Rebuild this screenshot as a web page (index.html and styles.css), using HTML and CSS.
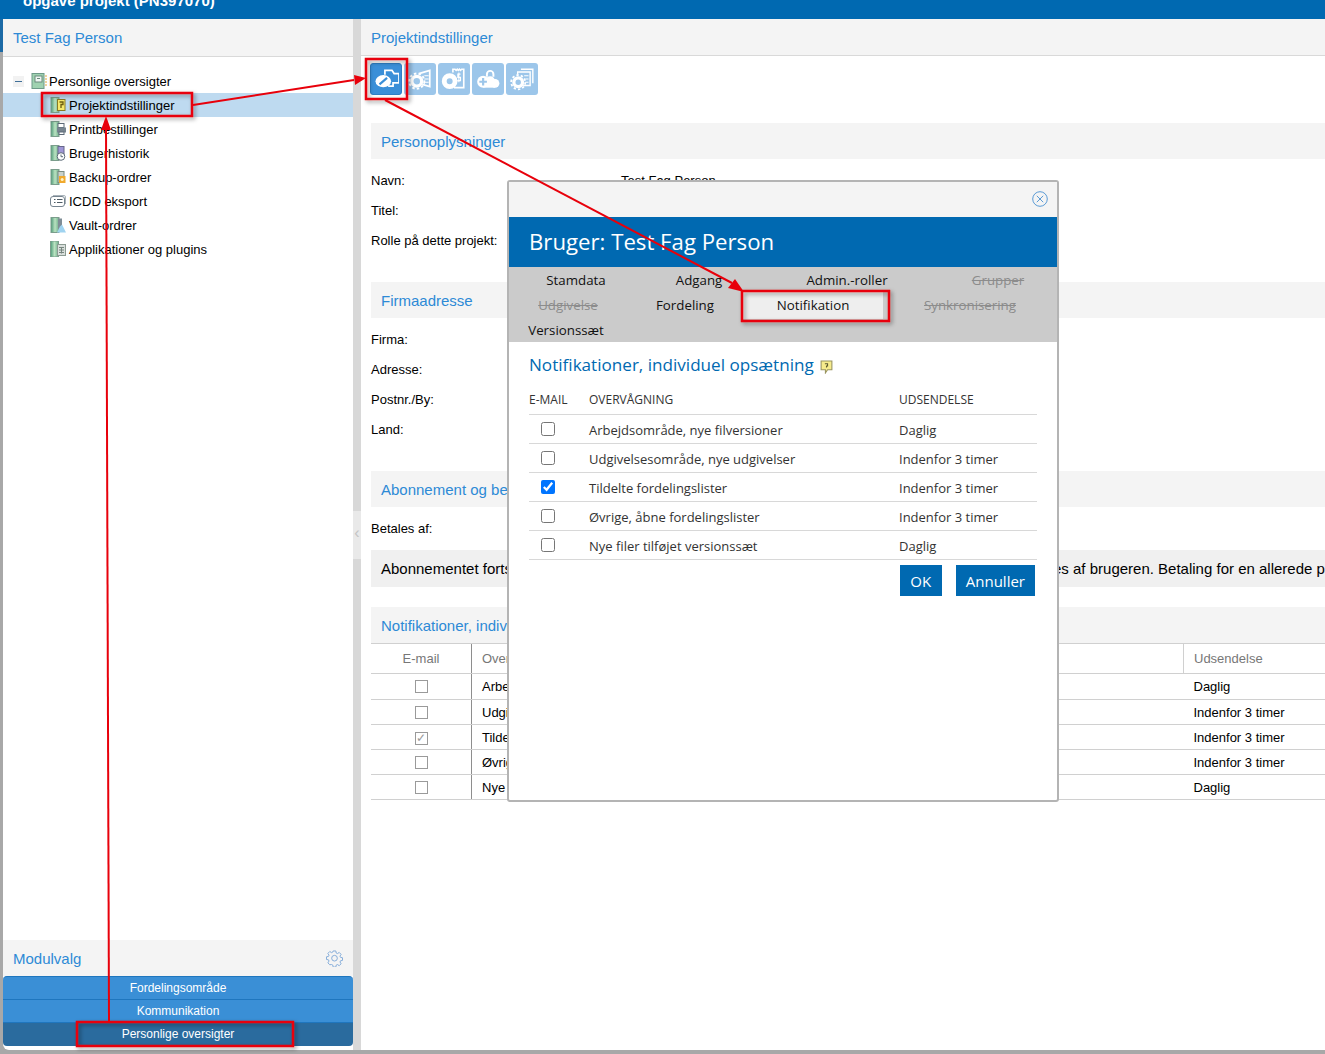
FILE: index.html
```html
<!DOCTYPE html>
<html>
<head>
    <meta charset="utf-8">
    <title>Projektindstillinger</title>
    <link rel="stylesheet" href="styles.css">
</head>
<body>
<svg class="defsOnly" width="0" height="0">
    <defs>
        <linearGradient id="bookGreen" x1="0" y1="0" x2="1" y2="0"><stop offset="0" stop-color="#4d9a78"/><stop offset="0.5" stop-color="#b9e2c0"/><stop offset="1" stop-color="#6fae8c"/></linearGradient>
    </defs>
</svg>
<div class="topBar"><span class="topTitle">opgave projekt (PN397070)</span></div>
<div class="shell">
    <div class="sidebar">
        <div class="panelHead"><span class="blueTitle">Test Fag Person</span></div>
        <div class="tree">
            <div class="treeRow rootRow">
                <span class="minus"></span>
                <svg class="bookIcon" viewBox="0 0 16 16"><rect x="1" y="0.500" width="12" height="15" fill="#9fd2b0" stroke="#6d9a88"/><rect x="4" y="3" width="7" height="6" fill="#eef6f2" stroke="#6b8a7c"/><path d="M6 5.500h3" stroke="#6b8a7c"/><path d="M14 3h2M14 6h2M14 9h2M14 12h2" stroke="#e0a83c"/></svg>
                Personlige oversigter
            </div>
            <div class="treeRow selected">
                <svg class="bookIcon" viewBox="0 0 16 16"><rect x="1" y="0.500" width="8" height="15" fill="url(#bookGreen)" stroke="#7b9d8c"/><rect x="7.500" y="2.500" width="7.500" height="11" fill="#f6e96c" stroke="#8a7a22"/><path d="M9.500 5h3.500v2.500h-2V11" fill="none" stroke="#6b5c10" stroke-width="1.300"/></svg>
                Projektindstillinger
            </div>
            <div class="treeRow">
                <svg class="bookIcon" viewBox="0 0 16 16"><rect x="1" y="0.500" width="8" height="15" fill="url(#bookGreen)" stroke="#7b9d8c"/><rect x="8" y="2.500" width="6" height="4" fill="#fff" stroke="#5d6a78"/><rect x="7" y="6.500" width="9" height="5" fill="#76838f"/><rect x="9" y="11" width="5" height="2.500" fill="#fff" stroke="#5d6a78"/></svg>
                Printbestillinger
            </div>
            <div class="treeRow">
                <svg class="bookIcon" viewBox="0 0 16 16"><rect x="1" y="0.500" width="8" height="15" fill="url(#bookGreen)" stroke="#7b9d8c"/><rect x="8" y="1.500" width="6" height="8" fill="#9e96d6" stroke="#66668a"/><circle cx="11" cy="11.500" r="3.800" fill="#fff" stroke="#5d6a78"/><path d="M11 9.500v2.200h2" stroke="#5d6a78" fill="none"/></svg>
                Brugerhistorik
            </div>
            <div class="treeRow">
                <svg class="bookIcon" viewBox="0 0 16 16"><rect x="1" y="0.500" width="8" height="15" fill="url(#bookGreen)" stroke="#7b9d8c"/><rect x="8" y="2.500" width="6" height="11" fill="#c9d2cc" stroke="#7b8a80"/><rect x="9" y="7" width="6.500" height="7" fill="#f0a92e"/><circle cx="12.200" cy="10.500" r="1.500" fill="#fff3c4"/></svg>
                Backup-ordrer
            </div>
            <div class="treeRow">
                <svg class="bookIcon" viewBox="0 0 16 16"><rect x="0.500" y="3.500" width="14" height="10" rx="2.500" fill="#fff" stroke="#76848f"/><path d="M3 2.500h11a1.500 1.500 0 0 1 1.500 1.500v7" fill="none" stroke="#aab4bb"/><path d="M4 6.500h1.500M4 9.500h1.500M7 6.500h5.500M7 9.500h5.500" stroke="#4f5c66" stroke-width="1.200"/></svg>
                ICDD eksport
            </div>
            <div class="treeRow">
                <svg class="bookIcon" viewBox="0 0 16 16"><rect x="1" y="0.500" width="8" height="15" fill="url(#bookGreen)" stroke="#7b9d8c"/><rect x="8" y="1.500" width="4" height="10" fill="#7f8d96"/><path d="M7 15.500l3-6 2-2 4 8z" fill="#9fd3f0"/></svg>
                Vault-ordrer
            </div>
            <div class="treeRow">
                <svg class="bookIcon" viewBox="0 0 16 16"><rect x="0.500" y="0" width="8" height="16" fill="url(#bookGreen)" stroke="#7b9d8c"/><rect x="7.500" y="3.500" width="8" height="11" fill="#d9dfdc" stroke="#8b9a92"/><path d="M9 6.500h5M9 9h5M9 11.500h5M11.500 6.500v6" stroke="#77857f"/></svg>
                Applikationer og plugins
            </div>
        </div>
        <div class="moduleHead">
            <span class="blueTitle">Modulvalg</span>
            <svg class="gear" viewBox="0 0 18 18"><path d="M7.600 1h2.800l.4 2.200 1.300.6 1.900-1.200 2 2-1.200 1.900.6 1.300 2.100.4v2.800l-2.100.4-.6 1.300 1.200 1.900-2 2-1.900-1.200-1.300.6-.4 2.100H7.600l-.4-2.100-1.300-.6L4 15.600l-2-2 1.200-1.900-.6-1.300L.5 10V7.200l2.100-.4.6-1.300L2 3.600l2-2 1.900 1.200 1.300-.6z" fill="none" stroke="#7fa9d8"/><circle cx="9" cy="8.700" r="3" fill="none" stroke="#7fa9d8"/></svg>
        </div>
        <div class="moduleBtn firstBtn">Fordelingsområde</div>
        <div class="moduleBtn">Kommunikation</div>
        <div class="moduleBtn active">Personlige oversigter</div>
    </div>

    <div class="splitter"><span class="splitTab">&#8249;</span></div>

    <div class="content">
        <div class="panelHead contentHead"><span class="blueTitle">Projektindstillinger</span></div>
        <div class="toolbar">
            <span class="toolBtn on">
                <svg viewBox="0 0 24 24"><path d="M11 8V4h6.500l2 3H24v8.500h-5.500v3H14" fill="none" stroke="#fff" stroke-width="1.600"/><ellipse cx="9.500" cy="14" rx="7.200" ry="5.600" fill="#fff"/><path d="M6 17l7-6" stroke="#3a8fd8" stroke-width="2"/></svg>
            </span>
            <span class="toolBtn">
                <svg viewBox="0 0 24 24"><path d="M11 7l10-3v15l-7-2" fill="none" stroke="#fff" stroke-width="1.600"/><path d="M16 9h4M16 12h4M16 15h4" stroke="#fff"/><circle cx="9" cy="14" r="4.500" fill="none" stroke="#fff" stroke-width="3"/><circle cx="9" cy="14" r="7" fill="none" stroke="#fff" stroke-width="1.800" stroke-dasharray="2.300 2"/></svg>
            </span>
            <span class="toolBtn">
                <svg viewBox="0 0 24 24"><path d="M11 6V3h2l1 1 1-1 1 1 1-1 1 1 1-1h2v17h-9" fill="none" stroke="#fff" stroke-width="1.500"/><path d="M18 7.500h-2.500v3h2.500v3h-3M16.500 6v9" fill="none" stroke="#fff"/><circle cx="8" cy="14" r="5" fill="none" stroke="#fff" stroke-width="4.500"/></svg>
            </span>
            <span class="toolBtn">
                <svg viewBox="0 0 24 24"><path d="M11 10V7.500a3 3 0 0 1 6 0V10" fill="none" stroke="#fff" stroke-width="1.800"/><g fill="#fff"><circle cx="7.500" cy="14.500" r="5.500"/><circle cx="14" cy="14" r="4.500"/><circle cx="18.500" cy="16" r="4"/><rect x="7.500" y="15" width="11" height="5"/></g><path d="M7.500 11v7M4 14.500h7" stroke="#9cc6ea" stroke-width="2"/></svg>
            </span>
            <span class="toolBtn">
                <svg viewBox="0 0 24 24"><path d="M11 3h11v13" fill="none" stroke="#fff" stroke-width="1.300"/><path d="M8 8V5.500h11.500V18H13" fill="none" stroke="#fff" stroke-width="1.300"/><path d="M14 9h4M15 12h3M15 15h3" stroke="#fff"/><circle cx="8.500" cy="15" r="4" fill="none" stroke="#fff" stroke-width="3"/><circle cx="8.500" cy="15" r="6.500" fill="none" stroke="#fff" stroke-width="1.600" stroke-dasharray="2.200 1.900"/></svg>
            </span>
        </div>

        <div class="band blueTitle">Personoplysninger</div>
        <div class="fields">
            <div class="field"><span class="fieldName">Navn:</span><span>Test Fag Person</span></div>
            <div class="field"><span class="fieldName">Titel:</span></div>
            <div class="field"><span class="fieldName">Rolle på dette projekt:</span></div>
        </div>

        <div class="band blueTitle">Firmaadresse</div>
        <div class="fields">
            <div class="field"><span class="fieldName">Firma:</span></div>
            <div class="field"><span class="fieldName">Adresse:</span></div>
            <div class="field"><span class="fieldName">Postnr./By:</span></div>
            <div class="field"><span class="fieldName">Land:</span></div>
        </div>

        <div class="band blueTitle">Abonnement og betaling</div>
        <div class="fields payField">
            <div class="field"><span class="fieldName">Betales af:</span></div>
        </div>
        <div class="notice">Abonnementet fortsætter automatisk i hele projektets levetid, eller lige indtil det helt udtrykkeligt opsiges af brugeren. Betaling for en allerede påbegyndt periode</div>

        <div class="band notifBand blueTitle">Notifikationer, individuel opsætning</div>
        <table class="notifTable">
            <tr><th class="colMail">E-mail</th><th class="colWatch">Overvågning</th><th>Udsendelse</th></tr>
            <tr class="firstRow"><td class="colMail"><span class="box"></span></td><td class="colWatch">Arbejdsområde, nye filversioner</td><td>Daglig</td></tr>
            <tr><td class="colMail"><span class="box"></span></td><td class="colWatch">Udgivelsesområde, nye udgivelser</td><td>Indenfor 3 timer</td></tr>
            <tr><td class="colMail"><span class="box">&#10003;</span></td><td class="colWatch">Tildelte fordelingslister</td><td>Indenfor 3 timer</td></tr>
            <tr><td class="colMail"><span class="box"></span></td><td class="colWatch">Øvrige, åbne fordelingslister</td><td>Indenfor 3 timer</td></tr>
            <tr><td class="colMail"><span class="box"></span></td><td class="colWatch">Nye filer tilføjet versionssæt</td><td>Daglig</td></tr>
        </table>
    </div>
</div>
<div class="bottomEdge"></div>

<div class="modal">
    <div class="modalTop">
        <svg class="closeIcon" viewBox="0 0 16 16"><circle cx="8" cy="8" r="7.300" fill="none" stroke="#5b9bd5"/><path d="M4.800 4.800l6.400 6.400M11.200 4.800l-6.400 6.400" stroke="#5b9bd5"/></svg>
    </div>
    <div class="modalHead">Bruger: Test Fag Person</div>
    <div class="tabs">
        <div class="tabRow row1">
            <span class="tab">Stamdata</span>
            <span class="tab">Adgang</span>
            <span class="tab">Admin.-roller</span>
            <span class="tab off">Grupper</span>
        </div>
        <div class="tabRow row2">
            <span class="tab off">Udgivelse</span>
            <span class="tab">Fordeling</span>
            <span class="tab current">Notifikation</span>
            <span class="tab off">Synkronisering</span>
        </div>
        <div class="tabRow row3">
            <span class="tab">Versionssæt</span>
        </div>
    </div>
    <div class="modalBody">
        <h2 class="modalTitle">Notifikationer, individuel opsætning
            <svg class="helpIcon" viewBox="0 0 12 13"><path d="M1 1h10v8H7l-2 3V9H1z" fill="#f7ec8c" stroke="#9a9560"/><path d="M4.500 3.500h2.500v2H6v1.500" fill="none" stroke="#5c5a30"/></svg>
        </h2>
        <table class="modalTable">
            <tr><th class="mailCol">E-MAIL</th><th class="watchCol">OVERVÅGNING</th><th>UDSENDELSE</th></tr>
            <tr><td class="mailCol"><input type="checkbox"></td><td>Arbejdsområde, nye filversioner</td><td>Daglig</td></tr>
            <tr><td class="mailCol"><input type="checkbox"></td><td>Udgivelsesområde, nye udgivelser</td><td>Indenfor 3 timer</td></tr>
            <tr><td class="mailCol"><input type="checkbox" checked></td><td>Tildelte fordelingslister</td><td>Indenfor 3 timer</td></tr>
            <tr><td class="mailCol"><input type="checkbox"></td><td>Øvrige, åbne fordelingslister</td><td>Indenfor 3 timer</td></tr>
            <tr><td class="mailCol"><input type="checkbox"></td><td>Nye filer tilføjet versionssæt</td><td>Daglig</td></tr>
        </table>
        <div class="modalBtns">
            <button class="blueBtn okBtn">OK</button>
            <button class="blueBtn">Annuller</button>
        </div>
    </div>
</div>

<!-- red markup drawn on top of the screenshot -->
<svg class="markup" viewBox="0 0 1325 1054">
    <defs>
        <filter id="soft" x="-10%" y="-10%" width="120%" height="120%"><feDropShadow dx="2" dy="2" stdDeviation="2" flood-color="#000" flood-opacity="0.4"/></filter>
    </defs>
    <g filter="url(#soft)" fill="none" stroke="#e8000b" stroke-width="2.500">
        <rect x="42" y="93" width="150" height="23"/>
        <rect x="366" y="59" width="41" height="40"/>
        <rect x="742" y="291" width="147" height="30"/>
        <rect x="77" y="1022" width="216" height="24"/>
    </g>
    <g fill="none" stroke="#e8000b" stroke-width="2">
        <path d="M193 105L354 80"/>
        <path d="M385 100L732 283"/>
        <path d="M109 1022L106 127"/>
    </g>
    <g fill="#e8000b">
        <path d="M366 78L354 75L355 85z"/>
        <path d="M744 292L728 288L735 279z"/>
        <path d="M106 116L101 130L111 130z"/>
    </g>
</svg>
</body>
</html>
```

FILE: styles.css
```css
html, body {
    margin: 0;
    height: 1054px;
    overflow: hidden;
    background-color: #fff;
}

body {
    font-family: "Liberation Sans", Arial, sans-serif;
    font-size: 13px;
    color: #000;
    position: relative;
}

.defsOnly {
    display: block;
    height: 0;
}

.topBar {
    height: 19px;
    background-color: #0069b1;
    overflow: hidden;
}

.topTitle {
    display: block;
    margin: -8px 0 0 23px;
    color: #fff;
    font-size: 15px;
    font-weight: bold;
}

.shell {
    display: flex;
    height: 1031px;
    padding-left: 3px;
    background: linear-gradient(#1c6aa6 33px, #a8a8a8 33px);
}

.sidebar {
    width: 350px;
    display: flex;
    flex-direction: column;
    padding-bottom: 4px;
    box-sizing: border-box;
    background-color: #fff;
    border-radius: 0 0 0 6px;
}

.blueTitle {
    color: #2d8ad6;
    font-size: 15px;
}

.panelHead {
    height: 37px;
    padding-left: 10px;
    display: flex;
    align-items: center;
    background-color: #f4f4f4;
    border-bottom: 1px solid #d9d9d9;
}

.tree {
    flex: 1;
    padding-top: 12px;
}

.treeRow {
    height: 24px;
    display: flex;
    align-items: center;
    padding-left: 47px;
    gap: 3px;
}

.rootRow {
    padding-left: 10px;
    gap: 2px;
}

.minus {
    width: 11px;
    height: 11px;
    margin-right: 5px;
    background-color: #f2f2f2;
    position: relative;
}

.minus::after {
    content: "";
    position: absolute;
    left: 2px;
    top: 5px;
    width: 7px;
    height: 1px;
    background-color: #3f6f98;
}

.bookIcon {
    width: 16px;
    height: 16px;
    flex: none;
}

.selected {
    background-color: #bedaf0;
}

.moduleHead {
    height: 36px;
    padding: 0 10px;
    display: flex;
    align-items: center;
    justify-content: space-between;
    background-color: #f4f4f4;
}

.gear {
    width: 17px;
    height: 17px;
}

.moduleBtn {
    height: 22px;
    line-height: 22px;
    text-align: center;
    color: #fff;
    font-size: 12px;
    background-color: #3a8fd6;
    border-top: 1px solid #1f76be;
}

.firstBtn {
    border-radius: 4px 4px 0 0;
}

.moduleBtn.active {
    background-color: #2a6b9e;
    height: 23px;
    border-radius: 0 0 4px 4px;
}

.splitter {
    width: 8px;
    background-color: #d8d8d8;
    position: relative;
}

.splitTab {
    position: absolute;
    left: 0;
    top: 492px;
    width: 8px;
    height: 48px;
    line-height: 44px;
    text-align: center;
    font-size: 16px;
    color: #c4c4c4;
    background-color: #e9e9e9;
}

.content {
    flex: 1;
    min-width: 0;
    background-color: #fff;
    overflow: hidden;
}

.contentHead {
    height: 36px;
}

.toolbar {
    display: flex;
    gap: 2px;
    padding: 7px 0 0 9px;
    height: 60px;
}

.toolBtn {
    width: 32px;
    height: 32px;
    box-sizing: border-box;
    border-radius: 3px;
    background-color: #9cc6ea;
    display: flex;
    align-items: center;
    justify-content: center;
}

.toolBtn.on {
    background-color: #3a8fd8;
    border: 1px solid #2f7fc4;
}

.toolBtn svg {
    width: 26px;
    height: 26px;
}

.band {
    height: 36px;
    line-height: 37px;
    margin-left: 10px;
    padding-left: 10px;
    background-color: #f4f4f4;
}

.fields {
    padding: 6px 0 27px 10px;
}

.payField {
    padding-bottom: 7px;
}

.field {
    display: flex;
    height: 30px;
    align-items: center;
}

.fieldName {
    width: 250px;
}

.notice {
    height: 37px;
    line-height: 37px;
    margin: 0 0 20px 10px;
    padding-left: 10px;
    white-space: nowrap;
    font-size: 15px;
    background-color: #f0f0f0;
}

.notifBand {
    border-bottom: 1px solid #d0d0d0;
}

.notifTable {
    margin-left: 10px;
    width: 954px;
    border-collapse: collapse;
}

.notifTable th {
    height: 29px;
    padding: 0 0 0 10px;
    font-weight: normal;
    text-align: left;
    color: #777;
    border-bottom: 1px solid #d0d0d0;
    border-left: 1px solid #d0d0d0;
}

.notifTable td {
    height: 24px;
    padding: 0 0 0 10px;
    border-bottom: 1px solid #d0d0d0;
}

.notifTable .firstRow td {
    height: 25px;
}

.notifTable .colMail {
    width: 100px;
    text-align: center;
    padding: 0;
    border-left: 0;
}

.notifTable .colWatch {
    width: 701px;
    border-left: 1px solid #8e8e8e;
}

.box {
    display: inline-block;
    width: 11px;
    height: 11px;
    line-height: 11px;
    margin-top: 3px;
    border: 1px solid #9a9a9a;
    background-color: #fff;
    color: #999;
    font-size: 12px;
}

.bottomEdge {
    height: 4px;
    background-color: #a8a8a8;
}

.modal {
    position: absolute;
    left: 507px;
    top: 180px;
    width: 548px;
    height: 618px;
    background-color: #fff;
    border: 2px solid #b4b4b4;
    border-radius: 3px;
    font-family: "Open Sans", "Noto Sans", sans-serif;
    font-size: 13px;
    color: #333;
}

.modalTop {
    height: 35px;
    background-color: #f4f4f4;
    position: relative;
}

.closeIcon {
    position: absolute;
    right: 9px;
    top: 9px;
    width: 16px;
    height: 16px;
}

.modalHead {
    height: 50px;
    line-height: 49px;
    padding-left: 20px;
    color: #fff;
    font-size: 22.200px;
    background-color: #0069b1;
}

.tabs {
    height: 75px;
    background-color: #cbcbcb;
}

.tabRow {
    display: grid;
    height: 25px;
}

.row1 {
    grid-template-columns: 134px 112px 184px 118px;
}

.row2 {
    grid-template-columns: 118px 116px 140px 174px;
}

.row3 {
    grid-template-columns: 114px;
}

.tab {
    text-align: center;
    line-height: 27px;
    font-size: 13.300px;
    color: #111;
}

.tab.off {
    color: #8c8c8c;
    text-decoration: line-through;
}

.tab.current {
    background-color: #eee;
}

.modalBody {
    padding: 10px 20px;
}

.modalTitle {
    margin: 0;
    font-size: 17.100px;
    line-height: 25px;
    font-weight: normal;
    color: #0069b1;
}

.helpIcon {
    width: 13px;
    height: 14px;
    margin-left: 2px;
    vertical-align: -3px;
}

.modalTable {
    width: 100%;
    margin-top: 7px;
    border-collapse: collapse;
}

.modalTable th {
    height: 30px;
    padding: 0;
    font-size: 12px;
    font-weight: normal;
    text-align: left;
    border-bottom: 1px solid #d8d8d8;
}

.modalTable td {
    height: 26px;
    padding: 2px 0 0;
    border-bottom: 1px solid #d8d8d8;
}

.mailCol {
    width: 60px;
}

.watchCol {
    width: 310px;
}

.mailCol input {
    display: block;
    margin: 0 0 2px 12px;
    width: 14px;
    height: 14px;
}

.modalBtns {
    display: flex;
    justify-content: flex-end;
    gap: 14px;
    padding: 5px 2px 0 0;
}

.blueBtn {
    height: 31px;
    padding: 0 10px;
    border: 0;
    color: #fff;
    font-family: inherit;
    font-size: 15px;
    background-color: #0069b1;
}

.okBtn {
    min-width: 42px;
}

.markup {
    position: absolute;
    left: 0;
    top: 0;
    width: 1325px;
    height: 1054px;
    pointer-events: none;
}
```
